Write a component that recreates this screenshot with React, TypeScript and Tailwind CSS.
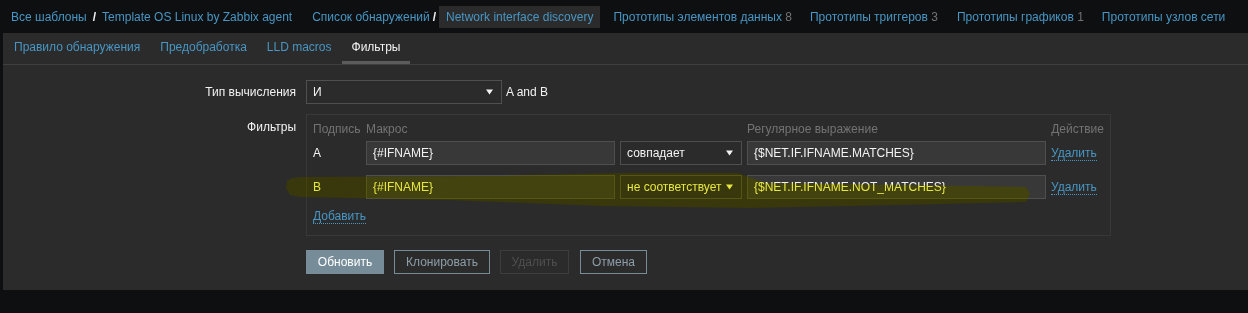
import React from 'react';

const link = 'text-[#4796c4]';

const Arrow = () => (
  <svg width="7" height="6" viewBox="0 0 7 6" className="shrink-0">
    <path d="M0 0.5 L7 0.5 L3.5 5.5 Z" fill="#f2f2f2" />
  </svg>
);

const Select = ({ value, className = '' }: { value: string; className?: string }) => (
  <div
    className={`h-[24px] flex items-center justify-between pl-[6px] pr-[8px] border border-[#4f4f4f] bg-[#2b2b2b] text-[#f2f2f2] ${className}`}
  >
    <span>{value}</span>
    <Arrow />
  </div>
);

const Input = ({ value }: { value: string }) => (
  <div className="h-[24px] flex items-center px-[6px] border border-[#4f4f4f] bg-[#383838] text-[#f2f2f2]">
    {value}
  </div>
);

const DotLink = ({ children }: { children: React.ReactNode }) => (
  <span className={`${link} border-b border-dotted border-[#4796c4] leading-[14px]`}>{children}</span>
);

const Count = ({ n }: { n: number }) => <span className="text-[#737373]"> {n}</span>;

const filters = [
  { label: 'A', macro: '{#IFNAME}', op: 'совпадает', value: '{$NET.IF.IFNAME.MATCHES}' },
  { label: 'B', macro: '{#IFNAME}', op: 'не соответствует', value: '{$NET.IF.IFNAME.NOT_MATCHES}' },
];

const marker =
  '287,181 292,178 300,177 500,176 620,173 738,173 765,183 900,185 1026,187 1030,194 1026,202 900,205 750,208 600,206 450,200 300,197 290,195 286,188';

export default function App() {
  return (
    <div className="relative h-[313px] bg-[#0e0f11] font-['Liberation_Sans',Arial,sans-serif] text-[12px] leading-[14px] text-[#f2f2f2]">
      {/* breadcrumbs / navigation */}
      <nav className="h-[33px] flex items-center pl-[11px] whitespace-nowrap">
        <span className={link}>Все шаблоны</span>
        <span className="mx-[6px] font-bold text-[#f2f2f2]">/</span>
        <span className={link}>Template OS Linux by Zabbix agent</span>
        <span className={`${link} ml-[20px]`}>Список обнаружений</span>
        <span className="mx-[3px] font-bold text-[#f2f2f2]">/</span>
        <span className={`${link} h-[22px] flex items-center px-[7px] bg-[#2b2b2b]`}>Network interface discovery</span>
        <span className={`${link} ml-[13px]`}>
          Прототипы элементов данных<Count n={8} />
        </span>
        <span className={`${link} ml-[18px]`}>
          Прототипы триггеров<Count n={3} />
        </span>
        <span className={`${link} ml-[19px]`}>
          Прототипы графиков<Count n={1} />
        </span>
        <span className={`${link} ml-[18px]`}>Прототипы узлов сети</span>
      </nav>

      <main className="ml-[3px] h-[257px] bg-[#2b2b2b]">
        {/* tabs */}
        <div className="h-[32px] flex items-stretch pl-[1px] border-b border-[#3f3f3f]">
          {['Правило обнаружения', 'Предобработка', 'LLD macros', 'Фильтры'].map((t, i) => (
            <div
              key={t}
              className={`flex items-center px-[10px] border-b-[3px] ${
                i === 3 ? 'border-[#5c5c5c] text-[#f2f2f2]' : `border-transparent ${link}`
              }`}
            >
              {t}
            </div>
          ))}
        </div>

        {/* form */}
        <div className="pt-[15px] grid grid-cols-[293px_auto] gap-x-[10px] gap-y-[10px] items-start">
          <div className="h-[24px] flex items-center justify-end">Тип вычисления</div>
          <div className="flex items-center gap-[4px]">
            <Select value="И" className="w-[196px]" />
            <span>A and B</span>
          </div>

          <div className="pt-[6px] text-right">Фильтры</div>
          <div className="w-[805px] border border-[#383838] px-[6px] pt-[5px] pb-[12px]">
            <div className="grid grid-cols-[48px_249px_122px_299px_auto] gap-x-[5px] items-center">
              <div className="h-[18px] flex items-center text-[#737373]">Подпись</div>
              <div className="h-[18px] flex items-center text-[#737373]">Макрос</div>
              <div />
              <div className="h-[18px] flex items-center text-[#737373]">Регулярное выражение</div>
              <div className="h-[18px] flex items-center justify-end text-[#737373]">Действие</div>

              {filters.map((f, i) => (
                <React.Fragment key={f.label}>
                  <div className={i === 0 ? 'mt-[3px]' : 'mt-[10px]'}>{f.label}</div>
                  <div className={i === 0 ? 'mt-[3px]' : 'mt-[10px]'}>
                    <Input value={f.macro} />
                  </div>
                  <div className={i === 0 ? 'mt-[3px]' : 'mt-[10px]'}>
                    <Select value={f.op} />
                  </div>
                  <div className={i === 0 ? 'mt-[3px]' : 'mt-[10px]'}>
                    <Input value={f.value} />
                  </div>
                  <div className={i === 0 ? 'mt-[3px]' : 'mt-[10px]'}>
                    <DotLink>Удалить</DotLink>
                  </div>
                </React.Fragment>
              ))}
            </div>
            <div className="mt-[10px]">
              <DotLink>Добавить</DotLink>
            </div>
          </div>

          <div />
          <div className="mt-[4px] flex">
            <button className="w-[78px] h-[24px] bg-[#768d99] text-white border border-[#768d99]">Обновить</button>
            <button className="ml-[10px] w-[96px] h-[24px] border border-[#768d99] text-[#8d9ea8]">Клонировать</button>
            <button className="ml-[10px] w-[69px] h-[24px] border border-[#3d3d3d] text-[#4f4f4f]">Удалить</button>
            <button className="ml-[11px] w-[67px] h-[24px] border border-[#768d99] text-[#8d9ea8]">Отмена</button>
          </div>
        </div>
      </main>

      {/* highlighter stroke drawn over row B */}
      <svg className="pointer-events-none absolute inset-0" width="1248" height="313" viewBox="0 0 1248 313">
        <polygon style={{ mixBlendMode: 'multiply' }} fill="#f2f24a" points={marker} />
        <polygon fill="rgba(255,255,0,0.07)" points={marker} />
      </svg>
    </div>
  );
}
